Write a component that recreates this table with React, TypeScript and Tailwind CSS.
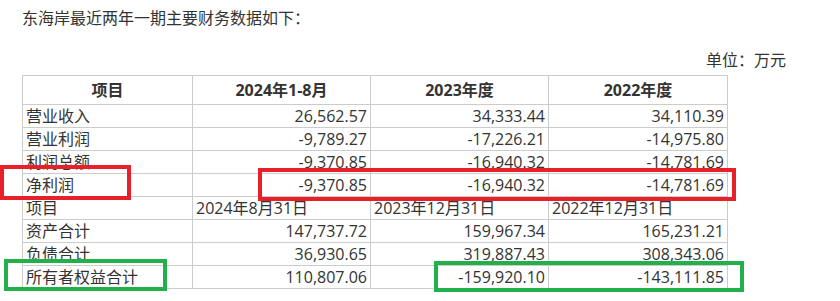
const rows: [string, string, string, string][] = [
  ['营业收入', '26,562.57', '34,333.44', '34,110.39'],
  ['营业利润', '-9,789.27', '-17,226.21', '-14,975.80'],
  ['利润总额', '-9,370.85', '-16,940.32', '-14,781.69'],
  ['净利润', '-9,370.85', '-16,940.32', '-14,781.69'],
];

const balance: [string, string, string, string][] = [
  ['资产合计', '147,737.72', '159,967.34', '165,231.21'],
  ['负债合计', '36,930.65', '319,887.43', '308,343.06'],
  ['所有者权益合计', '110,807.06', '-159,920.10', '-143,111.85'],
];

const cell = 'border border-[#cccccc] px-[3px] py-0 leading-[22px] whitespace-nowrap';

export default function App() {
  return (
    <div
      className="relative w-[840px] h-[301px] bg-white text-[16px] text-[#333]"
      style={{ fontFamily: '"Open Sans", "Noto Sans CJK SC", sans-serif' }}
    >
      <p className="pl-[22px] pt-[6px] leading-[24px]">东海岸最近两年一期主要财务数据如下：</p>
      <p className="mt-[18px] pr-[54px] text-right leading-[24px]">单位：万元</p>

      <table className="ml-[22px] mt-[3px] border-collapse table-fixed w-[705px]">
        <colgroup>
          <col className="w-[170px]" />
          <col className="w-[178px]" />
          <col className="w-[178px]" />
          <col className="w-[179px]" />
        </colgroup>
        <thead>
          <tr className="h-[29px]">
            <th className={`${cell} text-center font-bold`}>项目</th>
            <th className={`${cell} text-center font-bold`}>2024年1-8月</th>
            <th className={`${cell} text-center font-bold`}>2023年度</th>
            <th className={`${cell} text-center font-bold`}>2022年度</th>
          </tr>
        </thead>
        <tbody>
          {rows.map((r) => (
            <tr key={r[0]} className="h-[23px]">
              <td className={`${cell} text-left`}>{r[0]}</td>
              <td className={`${cell} text-right`}>{r[1]}</td>
              <td className={`${cell} text-right`}>{r[2]}</td>
              <td className={`${cell} text-right`}>{r[3]}</td>
            </tr>
          ))}
          <tr className="h-[23px]">
            <td className={`${cell} text-left`}>项目</td>
            <td className={`${cell} text-left`}>2024年8月31日</td>
            <td className={`${cell} text-left`}>2023年12月31日</td>
            <td className={`${cell} text-left`}>2022年12月31日</td>
          </tr>
          {balance.map((r) => (
            <tr key={r[0]} className="h-[23px]">
              <td className={`${cell} text-left`}>{r[0]}</td>
              <td className={`${cell} text-right`}>{r[1]}</td>
              <td className={`${cell} text-right`}>{r[2]}</td>
              <td className={`${cell} text-right`}>{r[3]}</td>
            </tr>
          ))}
        </tbody>
      </table>

      {/* annotation boxes drawn over the table */}
      <div className="absolute left-0 top-[165px] w-[131px] h-[35px] border-[4px] border-[#e8202a]" />
      <div className="absolute left-[258px] top-[168px] w-[478px] h-[33px] border-[4px] border-[#e8202a]" />
      <div className="absolute left-[4px] top-[259px] w-[163px] h-[32px] border-[4px] border-[#22b04b]" />
      <div className="absolute left-[434px] top-[261px] w-[310px] h-[31px] border-[4px] border-[#22b04b]" />
    </div>
  );
}
